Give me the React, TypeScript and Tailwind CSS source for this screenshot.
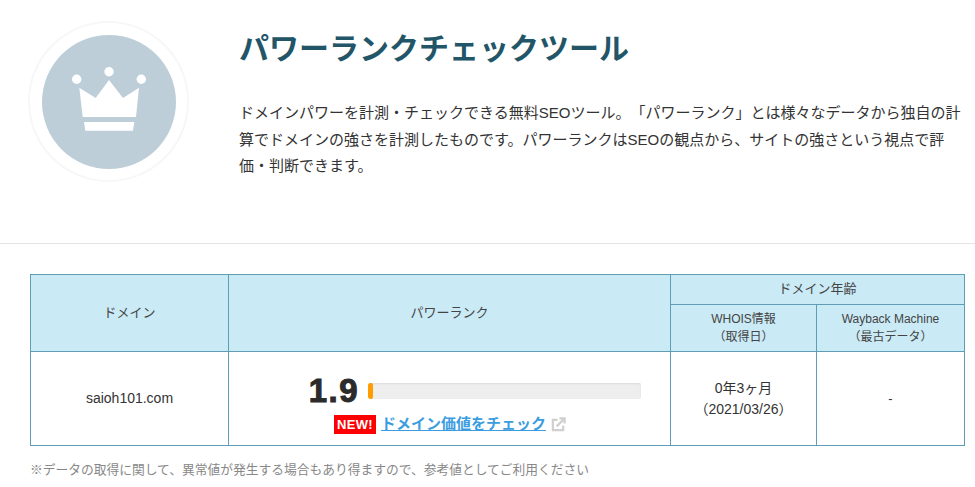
const sans = "font-['Liberation_Sans','Noto_Sans_CJK_JP',sans-serif]";

const CrownIcon = () => (
  <svg viewBox="0 0 134 134" className="w-[134px] h-[134px]">
    <circle cx="67" cy="67" r="67" fill="#bdced8" />
    <circle cx="34.7" cy="44.3" r="4.7" fill="#fff" />
    <circle cx="67" cy="36.7" r="4.7" fill="#fff" />
    <circle cx="99.3" cy="44.3" r="4.7" fill="#fff" />
    <path d="M37.300 52.700 L53.700 63 L67 45 L81 63 L97 52.700 L94 82 L40.700 82 Z" fill="#fff" />
    <path d="M42 87 H92.300 L91 95.700 H43.300 Z" fill="#fff" />
  </svg>
);

const ExternalIcon = () => (
  <svg viewBox="0 0 16 16" className="w-[15px] h-[15px]" fill="none" stroke="#d0d0d0" strokeWidth="2.400">
    <path d="M7 3H2v11h11V9" />
    <path d="M6 10 14 2M9 1.500h5.500V7" />
  </svg>
);

export default function App() {
  return (
    <div className={`${sans} w-[975px] h-[487px] overflow-hidden bg-white text-[#333] [text-spacing-trim:space-all]`}>
      <div className="h-[244px] border-b border-[#e4e4e4] flex items-start pl-7 pt-[21px]">
        <div className="w-[161px] h-[161px] rounded-full border-2 border-[#f7f7f7] flex items-center justify-center shrink-0">
          <CrownIcon />
        </div>
        <div className="ml-[50px] w-[725px]">
          <h1 className="text-[30px] leading-[45px] font-bold text-[#215567] mt-[5px]">パワーランクチェックツール</h1>
          <p className="text-[15px] leading-[26.500px] mt-[29px] text-[#333]">
            ドメインパワーを計測・チェックできる無料SEOツール。「パワーランク」とは様々なデータから独自の計算でドメインの強さを計測したものです。パワーランクはSEOの観点から、サイトの強さという視点で評価・判断できます。
          </p>
        </div>
      </div>

      <div className="px-[30px] pt-[30px]">
        <table className="w-[935px] table-fixed border-collapse text-[13px] text-center">
          <colgroup>
            <col className="w-[198px]" />
            <col className="w-[442px]" />
            <col className="w-[146px]" />
            <col className="w-[148px]" />
          </colgroup>
          <thead className="bg-[#caeaf6] text-[#444]">
            <tr className="h-[30px]">
              <th rowSpan={2} className="border border-[#5f9db5] font-normal">ドメイン</th>
              <th rowSpan={2} className="border border-[#5f9db5] font-normal">パワーランク</th>
              <th colSpan={2} className="border border-[#5f9db5] font-normal pb-[2px]">ドメイン年齢</th>
            </tr>
            <tr className="h-[47px] text-[12px] leading-[18px]">
              <th className="border border-[#5f9db5] font-normal">WHOIS情報<br />（取得日）</th>
              <th className="border border-[#5f9db5] font-normal">Wayback Machine<br />（最古データ）</th>
            </tr>
          </thead>
          <tbody>
            <tr className="h-[94px]">
              <td className="border border-[#5f9db5] text-[14px]">saioh101.com</td>
              <td className="border border-[#5f9db5] pt-[11px]">
                <div className="flex items-center justify-end pr-[29px]">
                  <span className="text-[33px] leading-[38px] font-bold text-[#2b2b2b] tracking-[1.5px] [-webkit-text-stroke:1px_#2b2b2b]">1.9</span>
                  <div className="ml-[9px] w-[273px] h-[16px] rounded-[2px] bg-[#eeeeee] shadow-[inset_0_1px_2px_rgba(0,0,0,0.08)] overflow-hidden">
                    <div className="h-full rounded-[2px] bg-[#ff9d00]" style={{ width: "2%" }} />
                  </div>
                </div>
                <div className="flex items-center justify-center mt-[3px] pl-[1px]">
                  <span className="bg-[#ff0000] text-white font-bold text-[13px] leading-[19px] px-[3px] tracking-[0.3px] mr-[5px]">NEW!</span>
                  <a href="#" className="text-[#3b9de0] font-bold text-[15px] underline mr-[5px]">ドメイン価値をチェック</a>
                  <ExternalIcon />
                </div>
              </td>
              <td className="border border-[#5f9db5] text-[14px] leading-[21px]">0年3ヶ月<br />（2021/03/26）</td>
              <td className="border border-[#5f9db5]">-</td>
            </tr>
          </tbody>
        </table>
        <p className="mt-[14px] text-[12.750px] text-[#888]">※データの取得に関して、異常値が発生する場合もあり得ますので、参考値としてご利用ください</p>
      </div>
    </div>
  );
}
